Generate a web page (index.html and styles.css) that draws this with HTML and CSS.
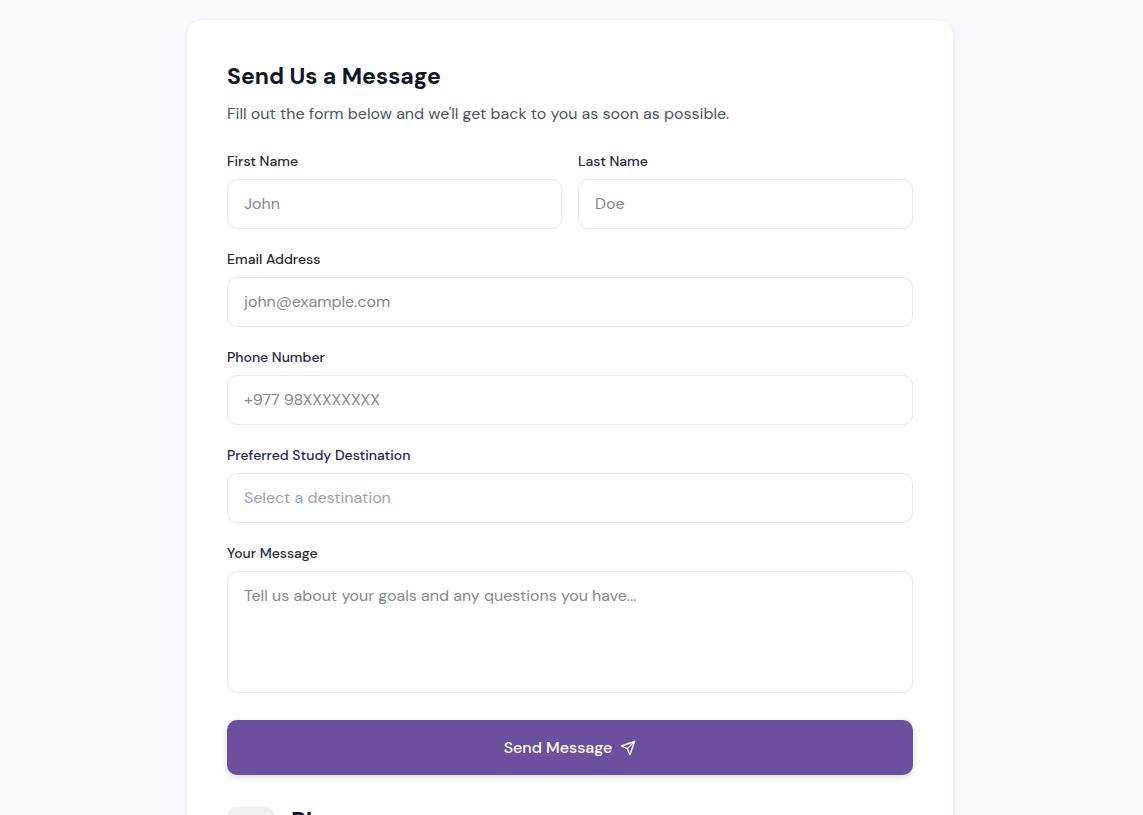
FILE: index.html
```html
<!DOCTYPE html>
<html lang="en">
<head>
    <meta charset="UTF-8">
    <meta name="viewport" content="width=device-width, initial-scale=1.0">
    <title>Contact Us</title>
    <link rel="stylesheet" href="styles.css">
</head>
<body>
    <main class="contact">
        <section class="card">
            <h2>Send Us a Message</h2>
            <p class="intro">Fill out the form below and we'll get back to you as soon as possible.</p>
            <form class="contact-form">
                <div class="form-row">
                    <div class="field">
                        <label for="first-name">First Name</label>
                        <input type="text" id="first-name" placeholder="John">
                    </div>
                    <div class="field">
                        <label for="last-name">Last Name</label>
                        <input type="text" id="last-name" placeholder="Doe">
                    </div>
                </div>
                <div class="field">
                    <label for="email">Email Address</label>
                    <input type="email" id="email" placeholder="john@example.com">
                </div>
                <div class="field">
                    <label for="phone">Phone Number</label>
                    <input type="tel" id="phone" placeholder="+977 98XXXXXXXX">
                </div>
                <div class="field">
                    <label for="destination">Preferred Study Destination</label>
                    <select id="destination">
                        <option value="">Select a destination</option>
                    </select>
                </div>
                <div class="field">
                    <label for="message">Your Message</label>
                    <textarea id="message" placeholder="Tell us about your goals and any questions you have..."></textarea>
                </div>
                <button type="submit" class="send">
                    Send Message
                    <svg viewBox="0 0 24 24" aria-hidden="true">
                        <path d="M22 2 11 13"/>
                        <path d="M22 2 15 22 11 13 2 9Z"/>
                    </svg>
                </button>
            </form>
            <div class="info">
                <span class="info-icon"></span>
                <h3>Phone</h3>
            </div>
        </section>
    </main>
</body>
</html>
```
FILE: styles.css
```css
* {
    box-sizing: border-box;
}
body {
    margin: 0;
    font-family: "DM Sans", Inter, sans-serif;
    font-size: 16px;
    color: #0f172a;
    background-color: #f9f7fd;
}
.contact {
    padding: 19px 19px 0 16px;
}
.card {
    max-width: 768px;
    margin: 0 auto;
    padding: 40px;
    background: #ffffff;
    border: 1px solid #f2f1f6;
    border-radius: 16px;
    box-shadow: 0 1px 3px rgba(15, 23, 42, 0.08);
}
h2 {
    margin: 0 0 8px;
    font-size: 23px;
    line-height: 32px;
}
.intro {
    margin: 0 0 24px;
    line-height: 27px;
    color: #475569;
}
.contact-form {
    display: flex;
    flex-direction: column;
    gap: 20px;
}
.form-row {
    display: grid;
    grid-template-columns: 1fr 1fr;
    gap: 16px;
}
.field {
    display: flex;
    flex-direction: column;
    gap: 8px;
}
label {
    font-size: 14px;
    font-weight: 500;
    line-height: 20px;
    color: #1e293b;
}
input,
select,
textarea {
    width: 100%;
    height: 50px;
    padding: 12px 16px;
    font: inherit;
    line-height: 24px;
    color: #0f172a;
    background: #ffffff;
    border: 1px solid #e5e7eb;
    border-radius: 10px;
    outline: none;
}
input {
    padding: 11px 16px 13px;
}
input::placeholder,
textarea::placeholder {
    color: #84878f;
}
select {
    appearance: none;
    color: #94a3b8;
}
textarea {
    height: 122px;
    resize: none;
}
input:focus,
select:focus,
textarea:focus {
    border-color: #6b4f9e;
}
.send {
    display: flex;
    align-items: center;
    justify-content: center;
    gap: 8px;
    height: 55px;
    margin-top: 7px;
    font: inherit;
    font-weight: 500;
    color: #ffffff;
    background: #6b509f;
    border: none;
    border-radius: 10px;
    box-shadow: 0 2px 6px rgba(0, 0, 0, 0.15);
    cursor: pointer;
}
.send:hover {
    background: #5c4389;
}
.send svg {
    width: 16px;
    height: 16px;
    fill: none;
    stroke: currentColor;
    stroke-width: 2;
    stroke-linecap: round;
    stroke-linejoin: round;
}
.info {
    display: flex;
    gap: 16px;
    margin-top: 32px;
}
.info-icon {
    width: 48px;
    height: 48px;
    background: #f0eef4;
    border-radius: 10px;
}
h3 {
    margin: 0;
    font-size: 24px;
    line-height: 30px;
}
```
